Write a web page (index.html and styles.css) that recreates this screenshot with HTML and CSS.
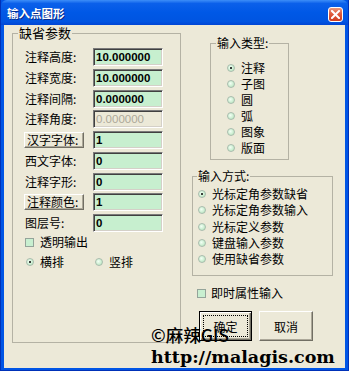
FILE: index.html
```html
<!DOCTYPE html>
<html lang="zh-CN">
<head>
    <meta charset="UTF-8">
    <title>输入点图形</title>
    <link rel="stylesheet" href="styles.css">
</head>
<body>
    <div class="window">
        <div class="titlebar">
            <span class="title">输入点图形</span>
            <span class="close">
                <svg width="9" height="9" viewBox="0 0 9 9">
                    <path d="M1 1 L8 8 M8 1 L1 8" stroke="#fff" stroke-width="2" stroke-linecap="square"/>
                </svg>
            </span>
        </div>

        <div class="client">
            <!-- 缺省参数 -->
            <fieldset class="group defaults">
                <legend>缺省参数</legend>
                <div class="group-body">
                    <div class="param-grid">
                        <span class="label">注释高度:</span><div class="field">10.000000</div>
                        <span class="label">注释宽度:</span><div class="field">10.000000</div>
                        <span class="label">注释间隔:</span><div class="field">0.000000</div>
                        <span class="label">注释角度:</span><div class="field disabled">0.000000</div>
                        <button class="label-btn">汉字字体:</button><div class="field">1</div>
                        <span class="label">西文字体:</span><div class="field">0</div>
                        <span class="label">注释字形:</span><div class="field">0</div>
                        <button class="label-btn">注释颜色:</button><div class="field">1</div>
                        <span class="label">图层号:</span><div class="field">0</div>
                    </div>
                    <label class="check transparent"><span class="box"></span>透明输出</label>
                    <div class="radio-row">
                        <label class="radio wide on"><span class="dot"></span>横排</label>
                        <label class="radio"><span class="dot"></span>竖排</label>
                    </div>
                </div>
            </fieldset>

            <div class="side">
                <!-- 输入类型 -->
                <fieldset class="group types">
                    <legend>输入类型:</legend>
                    <div class="radio-list">
                        <label class="radio on"><span class="dot"></span>注释</label>
                        <label class="radio"><span class="dot"></span>子图</label>
                        <label class="radio"><span class="dot"></span>圆</label>
                        <label class="radio"><span class="dot"></span>弧</label>
                        <label class="radio"><span class="dot"></span>图象</label>
                        <label class="radio"><span class="dot"></span>版面</label>
                    </div>
                </fieldset>

                <!-- 输入方式 -->
                <fieldset class="group modes">
                    <legend>输入方式:</legend>
                    <div class="radio-list">
                        <label class="radio on"><span class="dot"></span>光标定角参数缺省</label>
                        <label class="radio"><span class="dot"></span>光标定角参数输入</label>
                        <label class="radio"><span class="dot"></span>光标定义参数</label>
                        <label class="radio"><span class="dot"></span>键盘输入参数</label>
                        <label class="radio"><span class="dot"></span>使用缺省参数</label>
                    </div>
                </fieldset>

                <label class="check instant"><span class="box"></span>即时属性输入</label>

                <div class="buttons">
                    <button class="btn default"><span class="focus">确定</span></button>
                    <button class="btn">取消</button>
                </div>
            </div>

            <div class="watermark">
                <div class="wm-name">©麻辣GIS</div>
                <div class="wm-url">http://malagis.com</div>
            </div>
        </div>
    </div>
</body>
</html>
```

FILE: styles.css
```css
/* Global */
* {
    margin: 0;
    padding: 0;
    box-sizing: border-box;
}

body {
    background-color: #fff;
    font-family: "Noto Sans CJK SC", "Liberation Sans", sans-serif;
    font-size: 12px;
    color: #000;
}

/* Window frame */
.window {
    width: 349px;
    height: 371px;
    background-color: #0055e5;
    padding: 0 3px 3px;
    border-left: 1px solid #0031b8;
    border-right: 1px solid #0031b8;
    border-bottom: 1px solid #0031b8;
}

.titlebar {
    height: 25px;
    margin: 0 -3px;
    padding: 0 5px 0 6px;
    display: flex;
    align-items: center;
    justify-content: space-between;
    background: linear-gradient(to bottom, #3d8ef8 0%, #0b60ea 14%, #0058e6 50%, #0054e1 86%, #0045d4 100%);
    border-radius: 6px 6px 0 0;
}

.title {
    color: #fff;
    font-weight: 700;
    font-size: 11.5px;
    line-height: 14px;
    text-shadow: 1px 1px 0 #0a2a88;
    margin-top: 1px;
}

.close {
    width: 15px;
    height: 15px;
    margin-top: 3px;
    border: 1px solid #fff;
    border-radius: 3px;
    background: linear-gradient(to bottom, #eb9a7e 0%, #df5a3c 45%, #cf3d20 100%);
    display: flex;
    align-items: center;
    justify-content: center;
}

.client {
    position: relative;
    height: 343px;
    background-color: #ece9d8;
    display: flex;
    align-items: flex-start;
}

/* Group boxes */
.group {
    border: 1px solid #b4b2a4;
}

.group legend {
    line-height: 14px;
    margin-left: 4px;
    padding: 0 1px;
}

.defaults {
    margin-left: 8px;
    width: 169px;
    height: 318px;
}

.defaults legend {
    font-size: 13px;
    line-height: 16px;
    margin-left: 5px;
}

.group-body {
    padding: 7px 0 0 12px;
}

.param-grid {
    display: grid;
    grid-template-columns: 68px 70px;
    grid-auto-rows: 18px;
    row-gap: 2.75px;
    align-items: center;
}

.label {
    line-height: 16px;
}

.label-btn {
    width: 60px;
    height: 16px;
    margin-left: -1px;
    font-family: "Noto Sans CJK SC", sans-serif;
    font-size: 12px;
    line-height: 14px;
    text-align: left;
    padding: 0 0 0 2px;
    background-color: #ece9d8;
    border: 1px solid;
    border-color: #fff #716f64 #716f64 #fff;
    box-shadow: inset -1px -1px 0 #aca899;
}

.field {
    height: 18px;
    padding: 0 0 0 2px;
    border: 1px solid;
    border-color: #7a7a7a #fff #fff #7a7a7a;
    box-shadow: inset 1px 1px 0 #404040, inset -1px -1px 0 #d4d0c8;
    background-color: #c7efcf;
    font-family: "Liberation Sans", sans-serif;
    font-weight: 700;
    font-size: 11.5px;
    line-height: 16px;
    padding-left: 2px;
}

.field.disabled {
    background-color: #ece9d8;
    color: #aca899;
    font-weight: 400;
}

/* Checkboxes and radios */
.check, .radio {
    display: flex;
    align-items: center;
    height: 14px;
    line-height: 14px;
    white-space: nowrap;
}

.box {
    width: 9px;
    height: 9px;
    margin-right: 6px;
    border: 1px solid #94a49a;
    background-color: #c8efd0;
}

.dot {
    position: relative;
    width: 8px;
    height: 8px;
    margin-right: 6px;
    border-radius: 50%;
    border: 1px solid #a9bcad;
    background: radial-gradient(circle at 40% 40%, #f2fff4 0%, #c3eac9 70%, #a9d8b1 100%);
}

.radio.on .dot::after {
    content: "";
    position: absolute;
    left: 2px;
    top: 2px;
    width: 2px;
    height: 2px;
    background-color: #000;
    border-radius: 50%;
}

.transparent {
    margin-top: 3px;
    margin-left: 0;
}

.radio-row {
    display: flex;
    margin-top: 6px;
    padding-left: 1px;
}

.radio.wide {
    width: 69px;
}

/* Right side */
.side {
    margin-left: 11px;
    margin-top: 11px;
    width: 141px;
}

.types {
    margin-left: 18px;
    width: 79px;
    padding: 0 0 3px 16px;
}

.types legend {
    margin-left: -11px;
}

.types .radio-list {
    padding-top: 10px;
}

.radio-list .radio {
    height: 16px;
}

.modes {
    margin-top: 9px;
    padding: 3px 0 8px 5px;
}

.modes legend {
    margin-left: -1px;
}

.modes .radio {
    height: 16.25px;
}

.instant {
    margin-top: 10px;
    margin-left: 5px;
}

.instant .box {
    margin-right: 5px;
}

.buttons {
    display: flex;
    gap: 7px;
    margin-top: 11px;
    margin-left: 7px;
}

.btn {
    width: 53px;
    height: 30px;
    font-family: "Noto Sans CJK SC", sans-serif;
    font-size: 12px;
    background-color: #ece9d8;
    border: 1px solid;
    border-color: #fff #716f64 #716f64 #fff;
    box-shadow: inset -1px -1px 0 #aca899;
}

.btn + .btn {
    width: 54px;
}

.btn.default {
    border: 1px solid #000;
    box-shadow: inset 1px 1px 0 #fff, inset -1px -1px 0 #716f64, inset -2px -2px 0 #aca899;
    padding: 3px;
}

.focus {
    display: flex;
    align-items: center;
    justify-content: center;
    height: 100%;
    border: 1px dotted #000;
}

/* Watermark */
.watermark {
    position: absolute;
    left: 147px;
    top: 299px;
    color: #000;
}

.wm-name {
    font-size: 17.5px;
    font-weight: 500;
    line-height: 22px;
}

.wm-url {
    font-family: "DejaVu Serif", serif;
    font-weight: 700;
    font-size: 17.5px;
    line-height: 20px;
    margin-top: 1px;
}
```
